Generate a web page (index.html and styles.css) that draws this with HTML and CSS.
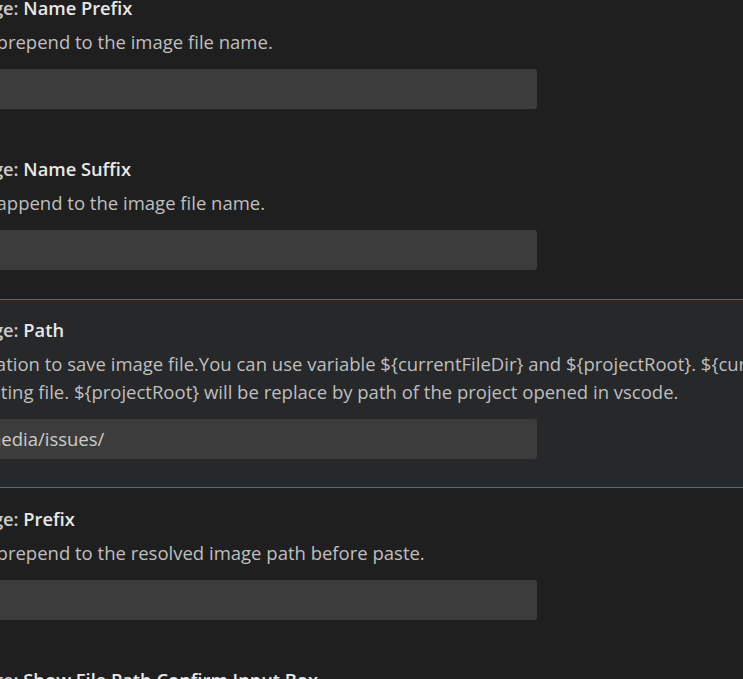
FILE: index.html
```html
<!DOCTYPE html>
<html lang="en">
<head>
<meta charset="utf-8">
<title>Settings</title>
<link rel="stylesheet" href="styles.css">
</head>
<body>
<div class="list">
  <div class="item">
    <div class="title"><span class="category">Paste Image: </span><span class="label">Name Prefix</span></div>
    <div class="desc">The string prepend to the image file name.</div>
    <div class="input"></div>
  </div>
  <div class="item">
    <div class="title"><span class="category">Paste Image: </span><span class="label">Name Suffix</span></div>
    <div class="desc">The string append to the image file name.</div>
    <div class="input"></div>
  </div>
  <div class="item focused">
    <div class="title"><span class="category">Paste Image: </span><span class="label">Path</span></div>
    <div class="desc">The destination to save image file.You can use variable ${currentFileDir} and ${projectRoot}. ${currentFileDir} will be replace by the path of directory that contain<br>current editing file. ${projectRoot} will be replace by path of the project opened in vscode.</div>
    <div class="input">./assets/media/issues/</div>
  </div>
  <div class="item">
    <div class="title"><span class="category">Paste Image: </span><span class="label">Prefix</span></div>
    <div class="desc">The string prepend to the resolved image path before paste.</div>
    <div class="input"></div>
  </div>
  <div class="item">
    <div class="title"><span class="category">Paste Image: </span><span class="label">Show File Path Confirm Input Box</span></div>
    <div class="desc">Enabling this will show an input box to confirm the file path before saving.</div>
    <div class="input"></div>
  </div>
</div>
</body>
</html>
```

FILE: styles.css
```css
html, body {
  margin: 0;
  padding: 0;
  height: 100%;
  overflow: hidden;
  background: #1f1f1f;
}

body {
  font-family: "Open Sans", "Noto Sans", sans-serif;
  font-size: 18.5px;
  color: #bfbfbf;
}

.list {
  margin: -23px 0 0 -108px;
  width: 1700px;
}

.item {
  padding: 16px 14px 28px;
  border-top: 1px solid transparent;
  border-bottom: 1px solid transparent;
}

.item.focused {
  background: #262829;
  border-top-color: #3471b0;
  border-bottom-color: #3471b0;
}

.title {
  line-height: 28px;
  font-size: 18.3px;
  font-weight: 600;
  white-space: nowrap;
}

.category {
  color: #cccccc;
}

.label {
  color: #e8e8e8;
}

.desc {
  margin-top: 6px;
  line-height: 28px;
  white-space: nowrap;
}

.input {
  margin-top: 13px;
  box-sizing: border-box;
  width: 631px;
  height: 40px;
  padding: 0 6px;
  line-height: 40px;
  background: #3c3c3c;
  border-radius: 3px;
  color: #cccccc;
}
```
